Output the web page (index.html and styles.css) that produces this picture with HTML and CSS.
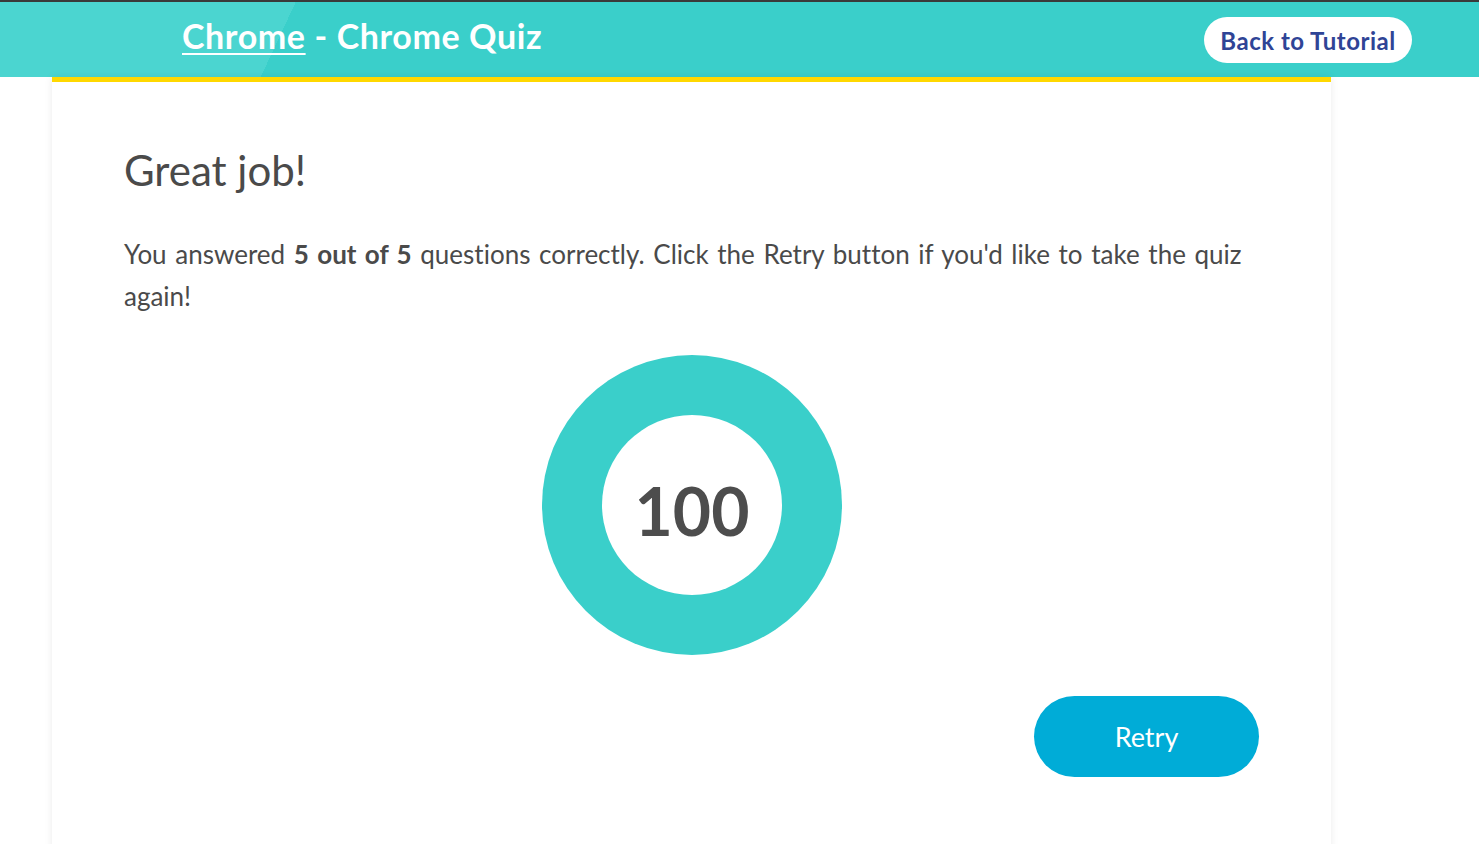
FILE: index.html
```html
<!DOCTYPE html>
<html lang="en">
<head>
<meta charset="utf-8">
<title>Chrome Quiz</title>
<link rel="stylesheet" href="styles.css">
</head>
<body>
<header class="topbar">
  <h1 class="quiz-title"><a href="#" class="course-link">Chrome</a> - Chrome Quiz</h1>
  <a href="#" class="back-btn">Back to Tutorial</a>
</header>
<main class="card">
  <h2 class="result-heading">Great job!</h2>
  <p class="result-text">You answered <strong>5 out of 5</strong> questions correctly. Click the Retry button if you'd like to take the quiz again!</p>
  <div class="score-wrap">
    <div class="donut">
      <div class="donut-hole"><span class="score">100</span></div>
    </div>
  </div>
  <div class="actions">
    <button class="retry-btn" type="button">Retry</button>
  </div>
</main>
</body>
</html>
```
FILE: styles.css
```css
* { box-sizing: border-box; }
html, body { margin: 0; padding: 0; background: #fff; }
body {
  font-family: "Lato", "Open Sans", sans-serif;
  font-variant-ligatures: none;
  color: #4a4a4a;
  border-top: 2px solid #3a3a3a;
  overflow: hidden;
  height: 844px;
}
.topbar {
  height: 75px;
  background: linear-gradient(115deg, #4bd5d0 0, #4bd5d0 268px, #3acfca 268px, #3acfca 1440px, #44d3ce 1440px);
  display: flex;
  align-items: center;
  justify-content: space-between;
  padding: 0 67px 0 182px;
}
.quiz-title {
  margin: 0 0 8px 0;
  font-size: 34px;
  font-weight: 700;
  color: #fff;
  letter-spacing: 0.6px;
}
.course-link { color: #fff; text-decoration: underline; text-underline-offset: 4px; text-decoration-thickness: 2px; }
.back-btn {
  background: #fff;
  color: #2f4496;
  text-decoration: none;
  font-weight: 700;
  font-size: 24px;
  letter-spacing: 0.5px;
  height: 46px;
  width: 208px;
  border-radius: 23px;
  display: flex;
  align-items: center;
  justify-content: center;
  margin-top: 1px;
}
.card {
  margin-left: 52px;
  width: 1279px;
  border-top: 5px solid #ffd800;
  background: #fff;
  box-shadow: 0 0 8px rgba(0,0,0,0.08);
  padding: 60px 72px 60px 72px;
  min-height: 800px;
}
.result-heading {
  margin: 0;
  font-size: 42px;
  font-weight: 400;
  color: #4a4a4a;
  line-height: 56px;
}
.result-text {
  margin: 35px 0 0;
  font-size: 26px;
  word-spacing: 2px;
  line-height: 42px;
  color: #4a4a4a;
}
.result-text strong { font-weight: 700; }
.score-wrap {
  display: flex;
  justify-content: center;
  margin-top: 38px;
  padding-left: 1px;
}
.donut {
  width: 300px;
  height: 300px;
  border-radius: 50%;
  background: #3acfca;
  display: flex;
  align-items: center;
  justify-content: center;
}
.donut-hole {
  width: 180px;
  height: 180px;
  border-radius: 50%;
  background: #fff;
  display: flex;
  align-items: center;
  justify-content: center;
}
.score {
  font-size: 66px;
  font-weight: 700;
  color: #4d4d4d;
  margin-top: 10px;
}
.actions {
  display: flex;
  justify-content: flex-end;
  margin-top: 41px;
}
.retry-btn {
  width: 225px;
  height: 81px;
  border-radius: 41px;
  border: 0;
  background: #00acd7;
  color: #fff;
  font-family: inherit;
  font-size: 27px;
  cursor: pointer;
}
```
